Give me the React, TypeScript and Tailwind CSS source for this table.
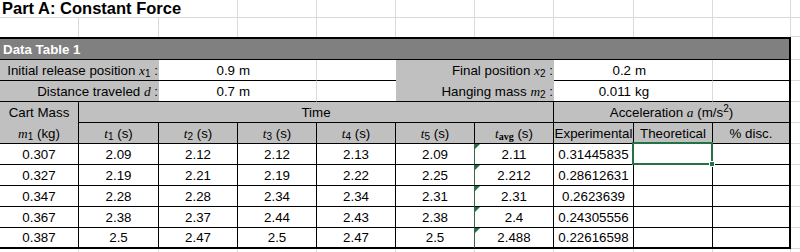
import type { ReactNode } from 'react';

function V({ children }: { children: ReactNode }) {
  return <i className="font-['Liberation_Serif','Times_New_Roman',serif]">{children}</i>;
}

function Cell({ className = '', children }: { className?: string; children?: ReactNode }) {
  return (
    <div className={`flex items-center whitespace-nowrap leading-[15px] ${className}`}>
      <span>{children}</span>
    </div>
  );
}

const rows = [
  ['0.307', '2.09', '2.12', '2.12', '2.13', '2.09', '2.11', '0.31445835'],
  ['0.327', '2.19', '2.21', '2.19', '2.22', '2.25', '2.212', '0.28612631'],
  ['0.347', '2.28', '2.28', '2.34', '2.34', '2.31', '2.31', '0.2623639'],
  ['0.367', '2.38', '2.37', '2.44', '2.43', '2.38', '2.4', '0.24305556'],
  ['0.387', '2.5', '2.47', '2.5', '2.47', '2.5', '2.488', '0.22616598'],
];

export default function App() {
  return (
    <div className="w-[800px] h-[252px] overflow-hidden bg-white text-black text-[13.33px] font-['Liberation_Sans',Arial,sans-serif]">
      <div className="grid h-full grid-cols-[79px_80px_79px_79px_79px_79px_79px_80px_79px_78px_1fr] grid-rows-[18px_19px_23px_repeat(9,21px)_1fr]">
        {/* title row */}
        <div className="col-span-3 flex items-end pl-[2px] border-r border-b border-[#dadada] text-[16.5px] font-bold leading-[18px] whitespace-nowrap">
          Part A: Constant Force
        </div>
        <div className="border-r border-b border-[#dadada]" />
        <div className="border-r border-b border-[#dadada]" />
        <div className="border-r border-b border-[#dadada]" />
        <div className="border-r border-b border-[#dadada]" />
        <div className="border-r border-b border-[#dadada]" />
        <div className="border-r border-b border-[#dadada]" />
        <div className="border-r border-b border-[#dadada]" />
        <div className="border-b border-[#dadada]" />

        {/* blank row */}
        <div className="border-r border-[#dadada]" />
        <div className="border-r border-[#dadada]" />
        <div className="border-r border-[#dadada]" />
        <div className="border-r border-[#dadada]" />
        <div className="border-r border-[#dadada]" />
        <div className="border-r border-[#dadada]" />
        <div className="border-r border-[#dadada]" />
        <div className="border-r border-[#dadada]" />
        <div className="border-r border-[#dadada]" />
        <div className="border-r border-[#dadada]" />
        <div className="border-b border-[#dadada]" />

        {/* table heading */}
        <Cell className="col-span-10 bg-[#808080] border-t-2 border-r-2 border-b border-black pl-[3px] text-white font-bold">
          Data Table 1
        </Cell>
        <div className="border-b border-[#dadada]" />

        {/* x1 / x2 */}
        <Cell className="col-span-2 justify-end pr-[1px] bg-[#c0c0c0] border-b border-black">
          Initial release position <V>x</V>
          <sub>1</sub> :
        </Cell>
        <Cell className="justify-end pr-[3px] border-b border-black">0.9</Cell>
        <Cell className="pl-[1px] border-r border-r-[#dadada] border-b border-b-black">m</Cell>
        <div className="border-b border-black" />
        <Cell className="col-span-2 justify-end pr-[1px] bg-[#c0c0c0]">
          Final position <V>x</V>
          <sub>2</sub> :
        </Cell>
        <Cell className="justify-end pr-[3px] border-b border-black">0.2</Cell>
        <Cell className="pl-[1px] border-r border-r-[#dadada] border-b border-b-black">m</Cell>
        <div className="border-r-2 border-b border-black" />
        <div className="border-b border-[#dadada]" />

        {/* d / m2 */}
        <Cell className="col-span-2 justify-end pr-[1px] bg-[#c0c0c0] border-b border-black">
          Distance traveled <V>d</V> :
        </Cell>
        <Cell className="justify-end pr-[3px] border-b border-black">0.7</Cell>
        <Cell className="pl-[1px] border-r border-r-[#dadada] border-b border-b-black">m</Cell>
        <div className="border-b border-black" />
        <Cell className="col-span-2 justify-end pr-[1px] bg-[#c0c0c0] border-b border-black">
          Hanging mass <V>m</V>
          <sub>2</sub> :
        </Cell>
        <Cell className="justify-end pr-[3px] border-b border-black">0.011</Cell>
        <Cell className="pl-[1px] border-r border-r-[#dadada] border-b border-b-black">kg</Cell>
        <div className="border-r-2 border-b border-black" />
        <div className="border-b border-[#dadada]" />

        {/* group headings */}
        <Cell className="justify-center bg-[#c0c0c0] border-r border-black">Cart Mass</Cell>
        <Cell className="col-span-6 justify-center bg-[#c0c0c0] border-r border-b border-black">Time</Cell>
        <Cell className="col-span-3 justify-center bg-[#c0c0c0] border-r-2 border-b border-black">
          Acceleration <V>a</V> (m/s<sup>2</sup>)
        </Cell>
        <div className="border-b border-[#dadada]" />

        {/* column headings */}
        <Cell className="justify-center bg-[#c0c0c0] border-r border-b border-black">
          <V>m</V>
          <sub>1</sub> (kg)
        </Cell>
        <Cell className="justify-center bg-[#c0c0c0] border-r border-b border-black">
          <V>t</V>
          <sub>1</sub> (s)
        </Cell>
        <Cell className="justify-center bg-[#c0c0c0] border-r border-b border-black">
          <V>t</V>
          <sub>2</sub> (s)
        </Cell>
        <Cell className="justify-center bg-[#c0c0c0] border-r border-b border-black">
          <V>t</V>
          <sub>3</sub> (s)
        </Cell>
        <Cell className="justify-center bg-[#c0c0c0] border-r border-b border-black">
          <V>t</V>
          <sub>4</sub> (s)
        </Cell>
        <Cell className="justify-center bg-[#c0c0c0] border-r border-b border-black">
          <V>t</V>
          <sub>5</sub> (s)
        </Cell>
        <Cell className="justify-center bg-[#c0c0c0] border-r border-b border-black">
          <V>t</V>
          <sub className="font-['Liberation_Serif',serif] font-bold">avg</sub> (s)
        </Cell>
        <Cell className="justify-center bg-[#c0c0c0] border-r border-b border-black">Experimental</Cell>
        <Cell className="justify-center bg-[#c0c0c0] border-r border-b border-black">Theoretical</Cell>
        <Cell className="justify-center bg-[#c0c0c0] border-r-2 border-b border-black">% disc.</Cell>
        <div className="border-b border-[#dadada]" />

        {/* data */}
        {rows.map((r, i) => {
          const last = i === rows.length - 1;
          const bb = last ? 'border-b-2' : 'border-b';
          return (
            <div key={r[0]} className="contents">
              <Cell className={`justify-center border-r ${bb} border-black`}>{r[0]}</Cell>
              <Cell className={`justify-center border-r ${bb} border-black`}>{r[1]}</Cell>
              <Cell className={`justify-center border-r ${bb} border-black`}>{r[2]}</Cell>
              <Cell className={`justify-center border-r ${bb} border-black`}>{r[3]}</Cell>
              <Cell className={`justify-center border-r ${bb} border-black`}>{r[4]}</Cell>
              <Cell className={`justify-center border-r ${bb} border-r-[#3b6446] border-b-black`}>{r[5]}</Cell>
              <div className={`relative flex items-center justify-center leading-[15px] border-r ${bb} border-black`}>
                <span className="absolute left-0 top-0 w-0 h-0 border-t-[5px] border-r-[5px] border-t-[#1e7145] border-r-transparent" />
                <span>{r[6]}</span>
              </div>
              <Cell className={`justify-center border-r ${bb} border-black`}>{r[7]}</Cell>
              <div className={`relative border-r ${bb} border-black`}>
                {i === 0 ? (
                  <div className="absolute z-10 -left-[2px] -top-[2px] -right-[1px] -bottom-[1px] border-2 border-[#217346]">
                    <span className="absolute -right-[4px] -bottom-[4px] w-[6px] h-[6px] bg-[#217346] border border-white" />
                  </div>
                ) : null}
              </div>
              <div className={`border-r-2 ${bb} border-black`} />
              <div className="border-b border-[#dadada]" />
            </div>
          );
        })}

        {/* trailing grid */}
        <div className="border-r border-[#dadada]" />
        <div className="border-r border-[#dadada]" />
        <div className="border-r border-[#dadada]" />
        <div className="border-r border-[#dadada]" />
        <div className="border-r border-[#dadada]" />
        <div className="border-r border-[#dadada]" />
        <div className="border-r border-[#dadada]" />
        <div className="border-r border-[#dadada]" />
        <div className="border-r border-[#dadada]" />
        <div className="border-r border-[#dadada]" />
        <div />
      </div>
    </div>
  );
}
